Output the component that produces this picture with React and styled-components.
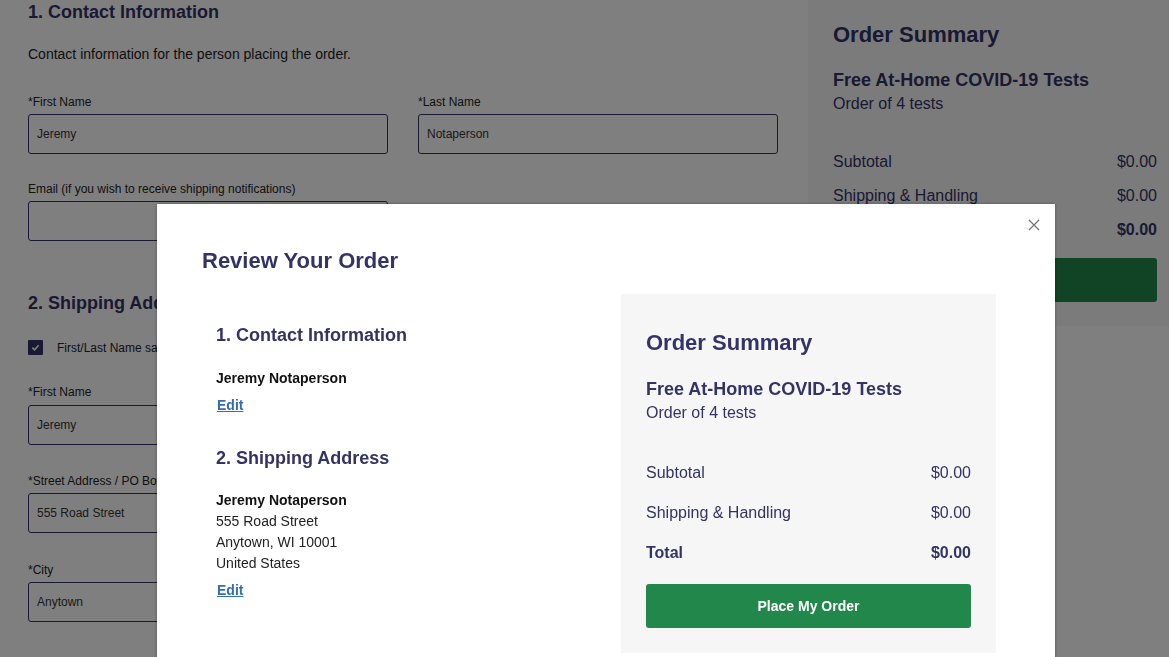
import React from "react";
import styled, { createGlobalStyle } from "styled-components";

const Global = createGlobalStyle`
  html, body { margin: 0; padding: 0; background: #fff; overflow: hidden; }
  body { font-family: "Liberation Sans", Arial, sans-serif; }
  * { box-sizing: border-box; }
`;

const NAVY = "#333366";

const Page = styled.div`
  display: flex;
  width: 1169px;
  height: 657px;
  overflow: hidden;
`;

const Main = styled.div`
  width: 808px;
  padding: 1px 0 0 28px;
`;

const SectionHeading = styled.h2`
  margin: ${(p) => p.$mt || 0}px 0 0;
  font-size: 18px;
  line-height: 22px;
  font-weight: 700;
  color: ${NAVY};
`;

const Description = styled.p`
  margin: 22px 0 0;
  font-size: 14px;
  line-height: 18px;
  color: #222;
`;

const FieldRow = styled.div`
  display: flex;
  gap: 30px;
  margin-top: ${(p) => p.$mt || 0}px;
`;

const Field = styled.div`
  width: 360px;
  margin-top: ${(p) => p.$mt || 0}px;
`;

const Label = styled.div`
  font-size: 12px;
  line-height: 14px;
  color: #222;
  margin-bottom: ${(p) => p.$gap || 5}px;
  white-space: nowrap;
`;

const Input = styled.div`
  height: 40px;
  border: 1px solid ${NAVY};
  border-radius: 3px;
  padding: 0 8px;
  display: flex;
  align-items: center;
  font-size: 12px;
  color: #333;
`;

const CheckRow = styled.div`
  display: flex;
  align-items: center;
  gap: 14px;
  margin-top: 26px;
  font-size: 12px;
  color: #222;
`;

const CheckBox = styled.span`
  width: 15px;
  height: 15px;
  background: ${NAVY};
  border-radius: 1px;
  display: inline-flex;
  align-items: center;
  justify-content: center;
`;

const Sidebar = styled.aside`
  width: 361px;
  height: 326px;
  background: #f7f7f7;
  padding: 23px 12px 24px 25px;
  display: flex;
  flex-direction: column;
`;

const SummaryTitle = styled.h3`
  margin: 0;
  font-size: 22px;
  line-height: 24px;
  font-weight: 700;
  color: ${NAVY};
`;

const ProductTitle = styled.div`
  margin-top: ${(p) => p.$mt}px;
  font-size: 18px;
  line-height: 24px;
  font-weight: 700;
  color: ${NAVY};
`;

const ProductSub = styled.div`
  font-size: 16px;
  line-height: 24px;
  color: ${NAVY};
`;

const Rows = styled.div`
  display: flex;
  flex-direction: column;
  gap: ${(p) => p.$gap}px;
  margin-top: ${(p) => p.$mt}px;
`;

const Row = styled.div`
  display: flex;
  justify-content: space-between;
  font-size: 16px;
  line-height: 24px;
  color: ${NAVY};
  font-weight: ${(p) => (p.$bold ? 700 : 400)};
`;

const GreenButton = styled.button`
  margin-top: ${(p) => p.$mt}px;
  height: 44px;
  width: 100%;
  border: none;
  border-radius: 3px;
  background: #22874a;
  color: #fff;
  font-family: "Liberation Sans", Arial, sans-serif;
  font-size: 14px;
  font-weight: 700;
  cursor: pointer;
`;

const Overlay = styled.div`
  position: fixed;
  inset: 0;
  background: rgba(0, 0, 0, 0.5);
`;

const Modal = styled.div`
  position: fixed;
  left: 157px;
  top: 204px;
  width: 898px;
  background: #fff;
  box-shadow: 0 0 3px rgba(0, 0, 0, 0.35);
  padding: 44px 59px 40px 45px;
`;

const CloseButton = styled.button`
  position: absolute;
  top: 10px;
  right: 10px;
  width: 22px;
  height: 22px;
  border: none;
  background: transparent;
  padding: 0;
  display: flex;
  align-items: center;
  justify-content: center;
  cursor: pointer;
`;

const ModalTitle = styled.h1`
  margin: 0;
  font-size: 22px;
  line-height: 26px;
  font-weight: 700;
  color: ${NAVY};
`;

const ModalBody = styled.div`
  display: flex;
  margin-top: 20px;
`;

const ReviewCol = styled.div`
  width: 419px;
  padding: 30px 0 0 14px;
`;

const ReviewHeading = styled.h2`
  margin: ${(p) => p.$mt || 0}px 0 0;
  font-size: 18px;
  line-height: 22px;
  font-weight: 700;
  color: ${NAVY};
`;

const Address = styled.div`
  margin-top: ${(p) => p.$mt}px;
  font-size: 14px;
  line-height: 21px;
  color: #222;
`;

const Name = styled.div`
  font-weight: 700;
  color: #111;
`;

const EditLink = styled.a`
  display: block;
  width: fit-content;
  margin-top: ${(p) => p.$mt}px;
  margin-left: 1px;
  font-size: 14px;
  line-height: 20px;
  font-weight: 700;
  color: #336fb0;
  text-decoration: underline;
  cursor: pointer;
`;

const SummaryBox = styled.div`
  width: 375px;
  background: #f6f6f6;
  padding: 37px 25px 25px;
  display: flex;
  flex-direction: column;
`;

const Check = () => (
  <svg width="9" height="9" viewBox="0 0 10 10">
    <path d="M1.5 5.2 L4 7.5 L8.5 2.5" fill="none" stroke="#fff" strokeWidth="1.8" />
  </svg>
);

const Summary = ({ compact }) => (
  <>
    <SummaryTitle>Order Summary</SummaryTitle>
    <ProductTitle $mt={compact ? 21 : 22}>Free At-Home COVID-19 Tests</ProductTitle>
    <ProductSub>Order of 4 tests</ProductSub>
    <Rows $gap={compact ? 10 : 16} $mt={compact ? 34 : 36}>
      <Row>
        <span>Subtotal</span>
        <span>$0.00</span>
      </Row>
      <Row>
        <span>Shipping &amp; Handling</span>
        <span>$0.00</span>
      </Row>
      <Row $bold>
        <span>Total</span>
        <span>$0.00</span>
      </Row>
    </Rows>
    <GreenButton $mt={compact ? 16 : 19}>Place My Order</GreenButton>
  </>
);

export default function App() {
  return (
    <>
      <Global />
      <Page>
        <Main>
          <SectionHeading>1. Contact Information</SectionHeading>
          <Description>Contact information for the person placing the order.</Description>
          <FieldRow $mt={32}>
            <Field>
              <Label>*First Name</Label>
              <Input>Jeremy</Input>
            </Field>
            <Field>
              <Label>*Last Name</Label>
              <Input>Notaperson</Input>
            </Field>
          </FieldRow>
          <Field $mt={28}>
            <Label>Email (if you wish to receive shipping notifications)</Label>
            <Input />
          </Field>
          <SectionHeading $mt={51}>2. Shipping Address</SectionHeading>
          <CheckRow>
            <CheckBox>
              <Check />
            </CheckBox>
            <span>First/Last Name same as Contact Information</span>
          </CheckRow>
          <FieldRow $mt={30}>
            <Field>
              <Label $gap={6}>*First Name</Label>
              <Input>Jeremy</Input>
            </Field>
            <Field>
              <Label $gap={6}>*Last Name</Label>
              <Input>Notaperson</Input>
            </Field>
          </FieldRow>
          <Field $mt={29}>
            <Label>*Street Address / PO Box</Label>
            <Input>555 Road Street</Input>
          </Field>
          <Field $mt={30}>
            <Label>*City</Label>
            <Input>Anytown</Input>
          </Field>
        </Main>
        <Sidebar>
          <Summary compact />
        </Sidebar>
      </Page>
      <Overlay />
      <Modal>
        <CloseButton aria-label="Close">
          <svg width="12" height="12" viewBox="0 0 12 12">
            <path d="M1 1 L11 11 M11 1 L1 11" stroke="#777" strokeWidth="1.3" fill="none" />
          </svg>
        </CloseButton>
        <ModalTitle>Review Your Order</ModalTitle>
        <ModalBody>
          <ReviewCol>
            <ReviewHeading>1. Contact Information</ReviewHeading>
            <Address $mt={22}>
              <Name>Jeremy Notaperson</Name>
            </Address>
            <EditLink $mt={6}>Edit</EditLink>
            <ReviewHeading $mt={32}>2. Shipping Address</ReviewHeading>
            <Address $mt={21}>
              <Name>Jeremy Notaperson</Name>
              <div>555 Road Street</div>
              <div>Anytown, WI 10001</div>
              <div>United States</div>
            </Address>
            <EditLink $mt={6}>Edit</EditLink>
          </ReviewCol>
          <SummaryBox>
            <Summary />
          </SummaryBox>
        </ModalBody>
      </Modal>
    </>
  );
}
